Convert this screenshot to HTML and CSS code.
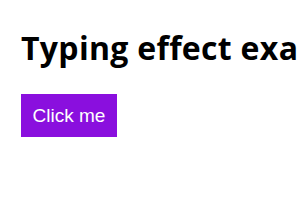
FILE: index.html
```html
<!DOCTYPE html>
<html lang="en">
<head>
    <meta charset="UTF-8">
    <meta name="viewport" content="width=device-width, initial-scale=1.0">
    <title>Typing effect example</title>
    <link rel="stylesheet" href="styles.css">
</head>
<body>

    <div class="page">
        <h1 class="title">Typing effect example</h1>
        <button class="click-btn">Click me</button>
    </div>

</body>
</html>
```

FILE: styles.css
```css
body {
    margin: 0;
    padding: 0;
    background: #ffffff;
    overflow: hidden;
}

.page {
    padding: 28px 21px;
}

.title {
    font-family: 'Open Sans', sans-serif;
    font-weight: bold;
    font-size: 32px;
    letter-spacing: 0.3px;
    color: #000;
    white-space: nowrap;
    margin: 0 0 26px;
    line-height: 40px;
}

.click-btn {
    font-family: 'Liberation Sans', Arial, sans-serif;
    font-size: 19px;
    color: #ffffff;
    background: #8a0fde;
    border: none;
    padding: 11px 10px;
    height: 43px;
    width: 96px;
    cursor: pointer;
}
```
